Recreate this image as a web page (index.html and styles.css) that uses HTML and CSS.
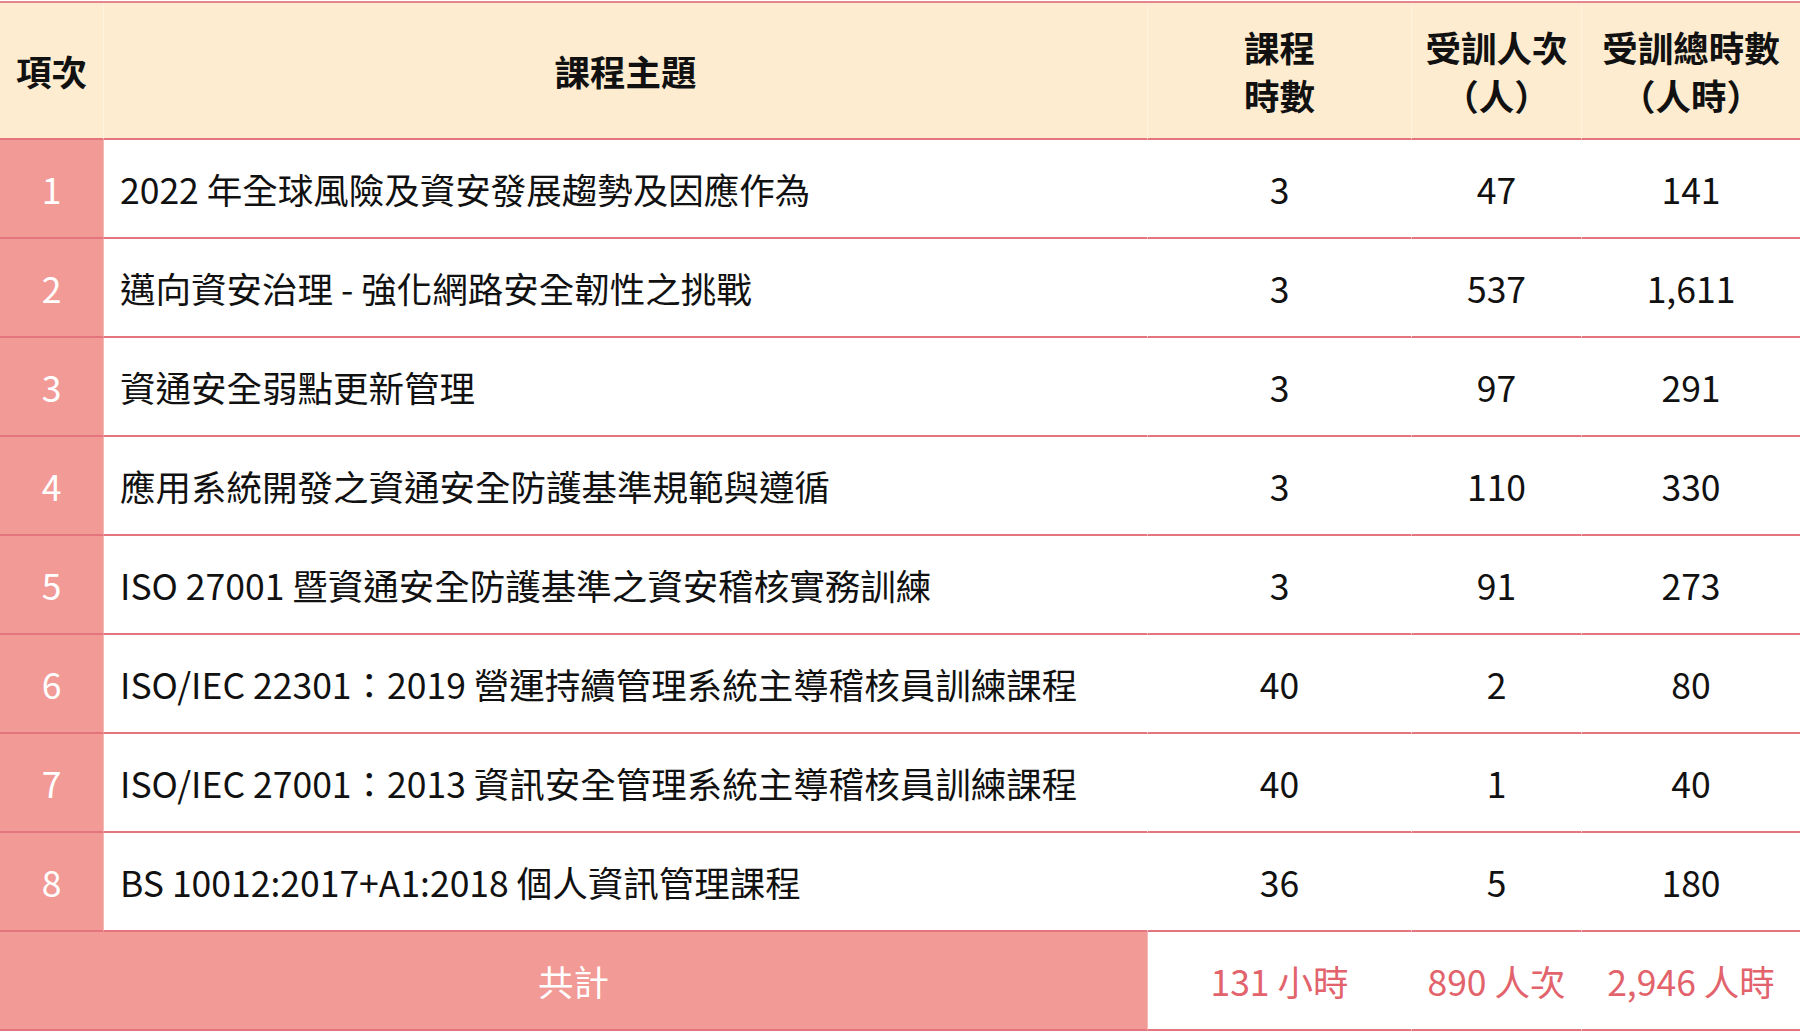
FILE: index.html
```html
<!DOCTYPE html>
<html lang="zh-Hant">
<head>
<meta charset="utf-8">
<title>課程統計</title>
<link rel="stylesheet" href="styles.css">
</head>
<body>
<table class="stats">
  <colgroup>
    <col class="c-no">
    <col class="c-title">
    <col class="c-hours">
    <col class="c-people">
    <col class="c-total">
  </colgroup>
  <thead>
    <tr>
      <th class="no">項次</th>
      <th>課程主題</th>
      <th>課程<br>時數</th>
      <th>受訓人次<br>（人）</th>
      <th>受訓總時數<br>（人時）</th>
    </tr>
  </thead>
  <tbody>
    <tr><td class="no">1</td><td class="title">2022 年全球風險及資安發展趨勢及因應作為</td><td class="num">3</td><td class="num">47</td><td class="num">141</td></tr>
    <tr><td class="no">2</td><td class="title">邁向資安治理 - 強化網路安全韌性之挑戰</td><td class="num">3</td><td class="num">537</td><td class="num">1,611</td></tr>
    <tr><td class="no">3</td><td class="title">資通安全弱點更新管理</td><td class="num">3</td><td class="num">97</td><td class="num">291</td></tr>
    <tr><td class="no">4</td><td class="title">應用系統開發之資通安全防護基準規範與遵循</td><td class="num">3</td><td class="num">110</td><td class="num">330</td></tr>
    <tr><td class="no">5</td><td class="title">ISO 27001 暨資通安全防護基準之資安稽核實務訓練</td><td class="num">3</td><td class="num">91</td><td class="num">273</td></tr>
    <tr><td class="no">6</td><td class="title">ISO/IEC 22301：2019 營運持續管理系統主導稽核員訓練課程</td><td class="num">40</td><td class="num">2</td><td class="num">80</td></tr>
    <tr><td class="no">7</td><td class="title">ISO/IEC 27001：2013 資訊安全管理系統主導稽核員訓練課程</td><td class="num">40</td><td class="num">1</td><td class="num">40</td></tr>
    <tr><td class="no">8</td><td class="title">BS 10012:2017+A1:2018 個人資訊管理課程</td><td class="num">36</td><td class="num">5</td><td class="num">180</td></tr>
  </tbody>
  <tfoot>
    <tr>
      <td class="sum-label" colspan="2">共計</td>
      <td class="sum">131 小時</td>
      <td class="sum">890 人次</td>
      <td class="sum">2,946 人時</td>
    </tr>
  </tfoot>
</table>
</body>
</html>
```

FILE: styles.css
```css
html, body {
  margin: 0;
  padding: 0;
  background: #ffffff;
}

body {
  font-family: "Noto Sans CJK TC", "Noto Sans CJK SC", "Noto Sans", sans-serif;
  color: #111111;
  padding-top: 1px;
}

.stats {
  width: 1800px;
  table-layout: fixed;
  border-collapse: separate;
  border-spacing: 0;
  font-size: 35.5px;
  border-top: 2px solid #e8858c;
}

.c-no { width: 104px; }
.c-title { width: 1044px; }
.c-hours { width: 264px; }
.c-people { width: 170px; }
.c-total { width: 218px; }

.stats th,
.stats td {
  padding: 0;
  border-bottom: 2px solid #e4747d;
  border-right: 1px solid rgba(255, 255, 255, 0.3);
  vertical-align: middle;
  text-align: center;
}

.stats th:last-child,
.stats td:last-child {
  border-right: none;
}

.stats thead th {
  background: #fdecd0;
  font-weight: 700;
  line-height: 48px;
  height: 135px;
  color: #111111;
}

.stats tbody td {
  height: 97px;
  line-height: 40px;
}

.stats td.no {
  background: #f29a96;
  color: #ffffff;
  font-weight: 400;
}

.stats td.title {
  text-align: left;
  padding-left: 16px;
  white-space: nowrap;
}

.stats tfoot td {
  height: 97px;
  line-height: 40px;
}

.stats td.sum-label {
  background: #f29a96;
  color: #ffffff;
}

.stats td.sum {
  color: #e2636c;
}
```
